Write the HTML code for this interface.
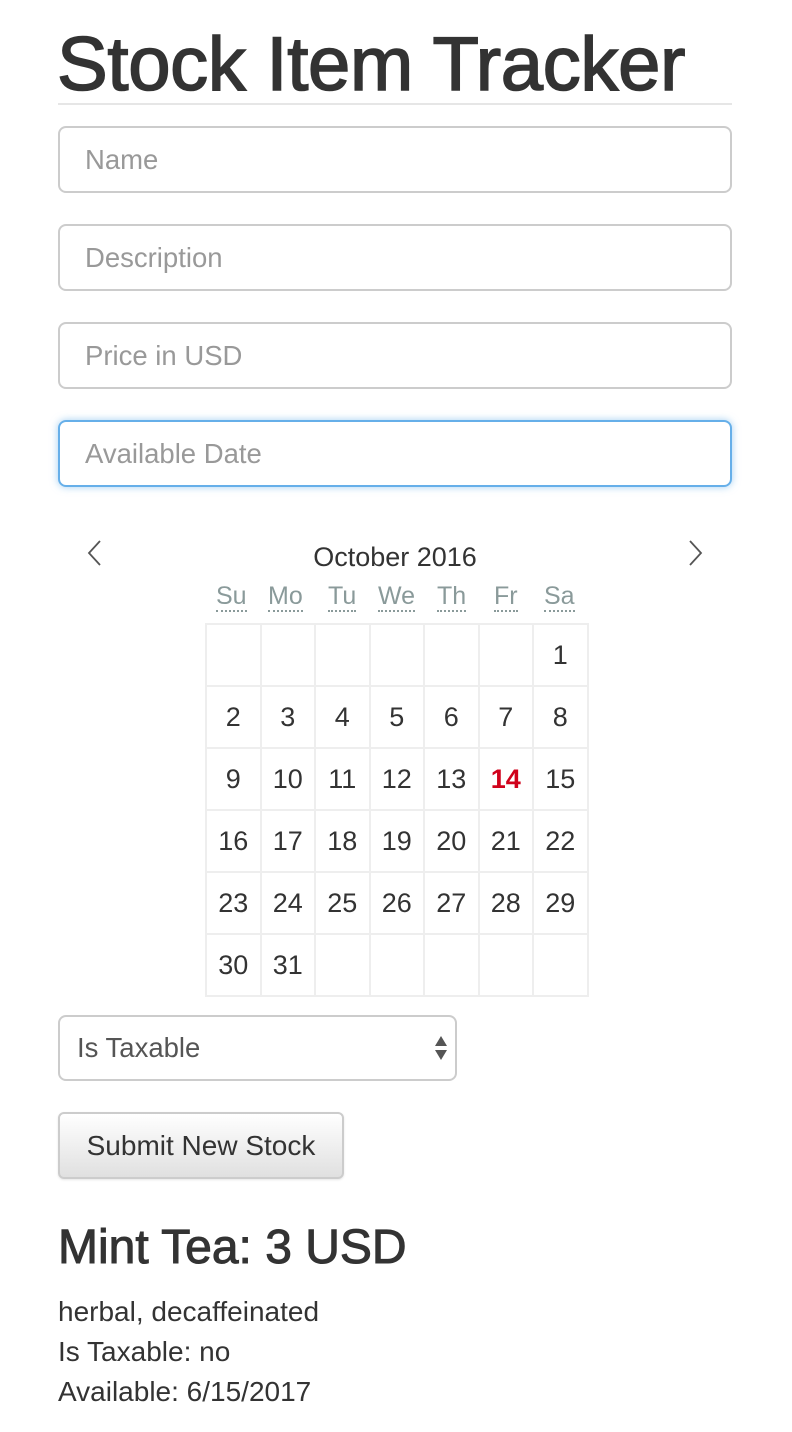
<!DOCTYPE html>
<html><head><style>
body{margin:0;width:792px;height:1432px;background:#fff;font-family:"Liberation Sans",Arial,sans-serif;color:#333;position:relative;overflow:hidden}
.a{position:absolute}
h1{position:absolute;left:57px;top:27px;margin:0;font-size:76px;font-weight:normal;-webkit-text-stroke:1.6px #333;line-height:1;letter-spacing:-0.3px;white-space:nowrap}
.hr{left:58px;top:103px;width:674px;height:2px;background:#e6e6e6}
.in{left:58px;height:63px;border:2px solid #ccc;border-radius:8px;font-size:27.5px;color:#999;line-height:63px;padding-left:25px;box-sizing:content-box;width:645px}
.focus{border-color:#66afe9;box-shadow:0 0 8px rgba(102,175,233,.6)}
.grid{left:205px;top:623px;border-collapse:collapse}
.grid td{border:2px solid #eee;width:52.5px;height:60px;text-align:center;font-size:27px;padding:0}
.dow{top:582px;font-size:25px;color:#8a9a9a;border-bottom:2px dotted #8a9a9a;line-height:28px}
</style></head><body>
<h1>Stock Item Tracker</h1>
<div class="a hr"></div>
<div class="a in" style="top:126px">Name</div>
<div class="a in" style="top:224px">Description</div>
<div class="a in" style="top:322px">Price in USD</div>
<div class="a in focus" style="top:420px">Available Date</div>

<svg class="a" style="left:84px;top:538px" width="20" height="32"><path d="M16 3 L5 15 L16 27" fill="none" stroke="#555" stroke-width="1.8"/></svg>
<svg class="a" style="left:686px;top:538px" width="20" height="32"><path d="M4 3 L15 15 L4 27" fill="none" stroke="#555" stroke-width="1.8"/></svg>
<div class="a" style="left:0;width:790px;top:542px;text-align:center;font-size:27px">October 2016</div>
<div class="a dow" style="left:216px">Su</div>
<div class="a dow" style="left:268px">Mo</div>
<div class="a dow" style="left:328px">Tu</div>
<div class="a dow" style="left:378px">We</div>
<div class="a dow" style="left:437px">Th</div>
<div class="a dow" style="left:494px">Fr</div>
<div class="a dow" style="left:544px">Sa</div>
<table class="a grid">
<tr><td></td><td></td><td></td><td></td><td></td><td></td><td>1</td></tr>
<tr><td>2</td><td>3</td><td>4</td><td>5</td><td>6</td><td>7</td><td>8</td></tr>
<tr><td>9</td><td>10</td><td>11</td><td>12</td><td>13</td><td style="color:#d0021b;font-weight:bold">14</td><td>15</td></tr>
<tr><td>16</td><td>17</td><td>18</td><td>19</td><td>20</td><td>21</td><td>22</td></tr>
<tr><td>23</td><td>24</td><td>25</td><td>26</td><td>27</td><td>28</td><td>29</td></tr>
<tr><td>30</td><td>31</td><td></td><td></td><td></td><td></td><td></td></tr>
</table>

<div class="a" style="left:58px;top:1015px;height:62px;border:2px solid #ccc;border-radius:8px;font-size:27.5px;color:#555;line-height:62px;padding-left:17px;box-sizing:content-box;width:378px">Is Taxable</div>
<svg class="a" style="left:433px;top:1036px" width="16" height="26"><path d="M8 0 L14 10 L2 10Z M8 24 L14 14 L2 14Z" fill="#555"/></svg>
<div class="a" style="left:58px;top:1112px;width:282px;height:63px;border:2px solid #ccc;border-radius:6px;background:linear-gradient(#fff,#e0e0e0);font-size:28px;line-height:63px;text-align:center;color:#333;box-shadow:0 1px 2px rgba(0,0,0,.1)">Submit New Stock</div>

<div class="a" style="left:58px;top:1220px;font-size:48px;-webkit-text-stroke:1px #333;line-height:56px">Mint Tea: 3 USD</div>
<div class="a" style="left:58px;top:1292px;font-size:28px;line-height:40px">herbal, decaffeinated<br>Is Taxable: no<br>Available: 6/15/2017</div>
</body></html>
